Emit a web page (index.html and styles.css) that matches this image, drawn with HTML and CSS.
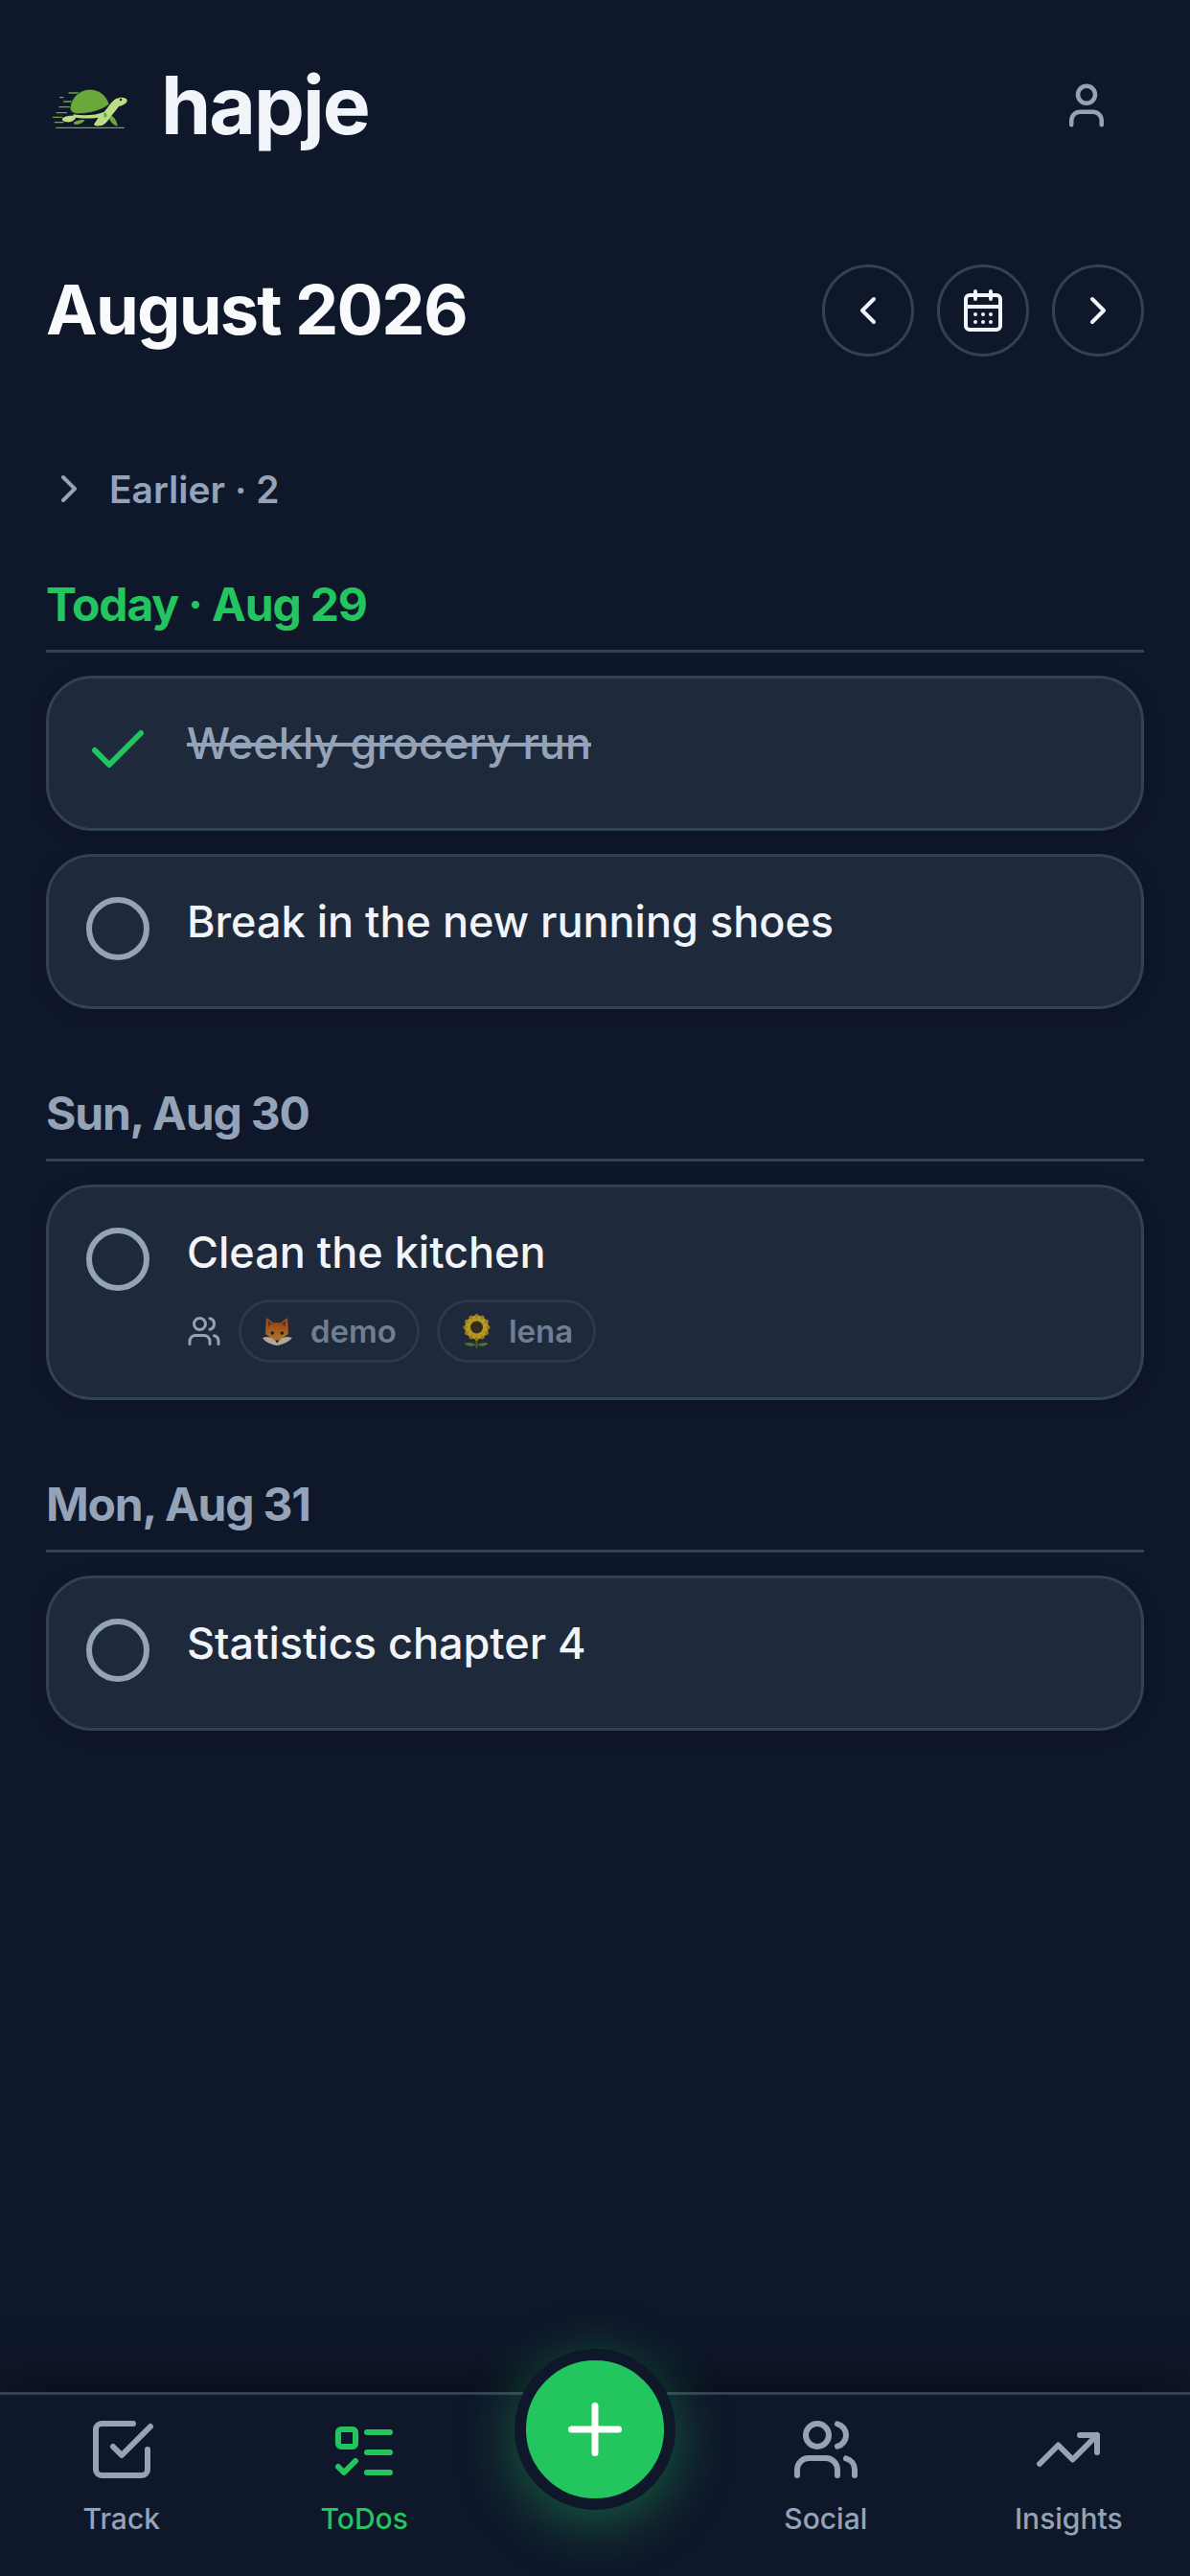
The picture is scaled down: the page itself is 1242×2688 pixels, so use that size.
FILE: index.html
```html
<!DOCTYPE html>
<html lang="en">
<head>
<meta charset="utf-8">
<title>hapje</title>
<link rel="stylesheet" href="styles.css">
</head>
<body>
<div class="app">
  <header class="topbar">
    <div class="brand">
      <svg class="logo" viewBox="0 0 330 240" aria-hidden="true">
        <g stroke="#6aa83c" stroke-width="4" stroke-linecap="round">
          <path d="M68 95h10M96 81h28M80 108h30M66 125h34M58 143h30M46 157h28M52 173h26"/>
        </g>
        <path d="M56 190h212" stroke="#6aa83c" stroke-width="4" stroke-linecap="round"/>
        <path d="M112 172c10-6 24-9 34-6-6 10-22 17-36 12z" fill="#6aa83c"/>
        <path d="M219 147c14 4 27 18 29 38-16-4-29-20-29-38z" fill="#6aa83c"/>
        <path d="M110 148c36 6 72 2 96-8 12-12 22-32 36-40 10-6 34-8 36 4 1 10-16 16-26 19-10 14-18 24-26 32-8 14-20 28-34 29-14 1-20-2-16-8 4-7 8-12 12-18-26 4-54 4-80-2z" fill="#bcdd88"/>
        <path d="M76 160c10-8 30-10 42-4-2 10-14 18-30 16-10-1-16-6-12-12z" fill="#bcdd88"/>
        <path d="M100 122c6-30 32-52 62-52 30 0 52 20 60 46-20 18-60 30-98 30-14 0-28-8-24-24z" fill="#6aa83c" stroke="#0f172a" stroke-width="2"/>
        <circle cx="258" cy="102" r="4" fill="#1b2a17"/>
        <path d="M204 146l8-4 3 12-7 6z" fill="#6aa83c"/>
      </svg>
      <span class="wordmark">hapje</span>
    </div>
    <button class="profile" type="button" aria-label="Profile">
      <svg class="icon-profile" viewBox="0 0 24 24"><path d="M19 21v-2a4 4 0 0 0-4-4H9a4 4 0 0 0-4 4v2"/><circle cx="12" cy="7" r="4"/></svg>
    </button>
  </header>

  <section class="month-row">
    <h1 class="month">August 2026</h1>
    <div class="month-nav">
      <button class="round" type="button" aria-label="Previous"><svg class="icon-48" viewBox="0 0 24 24"><path d="m15 18-6-6 6-6"/></svg></button>
      <button class="round" type="button" aria-label="Calendar"><svg class="icon-48" viewBox="0 0 24 24"><path d="M8 2v4M16 2v4M3 10h18"/><rect x="3" y="4" width="18" height="18" rx="2"/><path d="M8 14h.01M12 14h.01M16 14h.01M8 18h.01M12 18h.01M16 18h.01"/></svg></button>
      <button class="round" type="button" aria-label="Next"><svg class="icon-48" viewBox="0 0 24 24"><path d="m9 18 6-6-6-6"/></svg></button>
    </div>
  </section>

  <main class="list">
    <div class="earlier">
      <svg class="icon-48" viewBox="0 0 24 24"><path d="m9 18 6-6-6-6"/></svg>
      <span>Earlier · 2</span>
    </div>

    <section class="day">
      <h2 class="day-title today">Today · Aug 29</h2>
      <div class="cards">
        <article class="card">
          <span class="mark"><svg class="icon-check" viewBox="0 0 24 24"><path d="M20 6 9 17l-5-5"/></svg></span>
          <div class="body"><p class="title done">Weekly grocery run</p></div>
        </article>
        <article class="card">
          <span class="mark"><span class="ring"></span></span>
          <div class="body"><p class="title">Break in the new running shoes</p></div>
        </article>
      </div>
    </section>

    <section class="day">
      <h2 class="day-title">Sun, Aug 30</h2>
      <div class="cards">
        <article class="card">
          <span class="mark"><span class="ring"></span></span>
          <div class="body">
            <p class="title">Clean the kitchen</p>
            <div class="people">
              <svg class="icon-people" viewBox="0 0 24 24"><path d="M16 21v-2a4 4 0 0 0-4-4H6a4 4 0 0 0-4 4v2"/><circle cx="9" cy="7" r="4"/><path d="M22 21v-2a4 4 0 0 0-3-3.87"/><path d="M16 3.13a4 4 0 0 1 0 7.75"/></svg>
              <span class="chip">
                <svg class="emoji" viewBox="0 0 36 36" aria-hidden="true">
                  <defs><linearGradient id="foxfur" x1="0" y1="0" x2="0" y2="1"><stop offset="0" stop-color="#c9570a"/><stop offset="1" stop-color="#f59a1e"/></linearGradient></defs>
                  <path d="M5 4l8 6h6l8-6 1 14-11 10L4 18z" fill="#d9650f"/>
                  <path d="M6.500 6.500l5 4.500-4 5zM25.500 6.500l-5 4.500 4 5z" fill="#7d3608"/>
                  <path d="M16 9c6 0 11 5 12 12l-12 8L4 21c1-7 6-12 12-12z" fill="url(#foxfur)"/>
                  <path d="M1 25c5-2 9-1 12 2l3 1 3-1c3-3 7-4 13-2-3 4-10 7-16 8-6-1-13-4-15-8z" fill="#f1dcc2"/>
                  <circle cx="11.300" cy="20" r="1.800" fill="#1c1410"/>
                  <circle cx="21.300" cy="20" r="1.800" fill="#1c1410"/>
                  <path d="M14 27.500h4.600l-2.300 3z" fill="#1c1410"/>
                </svg>
                demo
              </span>
              <span class="chip">
                <svg class="emoji" viewBox="0 0 36 36" aria-hidden="true">
                  <path d="M17.500 24v11" stroke="#5f7d28" stroke-width="2"/>
                  <path d="M16.500 32c-3-2-8-3-12-1 4 3 9 4 12 1zM18.500 32c3-2 8-3 11-1-3 3-8 4-11 1z" fill="#6b8a2c"/>
                  <g fill="#d99a0c">
                    <ellipse cx="17.500" cy="4" rx="2.600" ry="4" transform="rotate(0 17.500 14)"/>
                    <ellipse cx="17.500" cy="4" rx="2.600" ry="4" transform="rotate(30 17.500 14)"/>
                    <ellipse cx="17.500" cy="4" rx="2.600" ry="4" transform="rotate(60 17.500 14)"/>
                    <ellipse cx="17.500" cy="4" rx="2.600" ry="4" transform="rotate(90 17.500 14)"/>
                    <ellipse cx="17.500" cy="4" rx="2.600" ry="4" transform="rotate(120 17.500 14)"/>
                    <ellipse cx="17.500" cy="4" rx="2.600" ry="4" transform="rotate(150 17.500 14)"/>
                    <ellipse cx="17.500" cy="4" rx="2.600" ry="4" transform="rotate(180 17.500 14)"/>
                    <ellipse cx="17.500" cy="4" rx="2.600" ry="4" transform="rotate(210 17.500 14)"/>
                    <ellipse cx="17.500" cy="4" rx="2.600" ry="4" transform="rotate(240 17.500 14)"/>
                    <ellipse cx="17.500" cy="4" rx="2.600" ry="4" transform="rotate(270 17.500 14)"/>
                    <ellipse cx="17.500" cy="4" rx="2.600" ry="4" transform="rotate(300 17.500 14)"/>
                    <ellipse cx="17.500" cy="4" rx="2.600" ry="4" transform="rotate(330 17.500 14)"/>
                  </g>
                  <g fill="#f4cb1e">
                    <ellipse cx="17.500" cy="5.500" rx="2.200" ry="3.800" transform="rotate(15 17.500 14)"/>
                    <ellipse cx="17.500" cy="5.500" rx="2.200" ry="3.800" transform="rotate(45 17.500 14)"/>
                    <ellipse cx="17.500" cy="5.500" rx="2.200" ry="3.800" transform="rotate(75 17.500 14)"/>
                    <ellipse cx="17.500" cy="5.500" rx="2.200" ry="3.800" transform="rotate(105 17.500 14)"/>
                    <ellipse cx="17.500" cy="5.500" rx="2.200" ry="3.800" transform="rotate(135 17.500 14)"/>
                    <ellipse cx="17.500" cy="5.500" rx="2.200" ry="3.800" transform="rotate(165 17.500 14)"/>
                    <ellipse cx="17.500" cy="5.500" rx="2.200" ry="3.800" transform="rotate(195 17.500 14)"/>
                    <ellipse cx="17.500" cy="5.500" rx="2.200" ry="3.800" transform="rotate(225 17.500 14)"/>
                    <ellipse cx="17.500" cy="5.500" rx="2.200" ry="3.800" transform="rotate(255 17.500 14)"/>
                    <ellipse cx="17.500" cy="5.500" rx="2.200" ry="3.800" transform="rotate(285 17.500 14)"/>
                    <ellipse cx="17.500" cy="5.500" rx="2.200" ry="3.800" transform="rotate(315 17.500 14)"/>
                    <ellipse cx="17.500" cy="5.500" rx="2.200" ry="3.800" transform="rotate(345 17.500 14)"/>
                  </g>
                  <circle cx="17.500" cy="14" r="6.500" fill="#3f2b12"/>
                </svg>
                lena
              </span>
            </div>
          </div>
        </article>
      </div>
    </section>

    <section class="day">
      <h2 class="day-title">Mon, Aug 31</h2>
      <div class="cards">
        <article class="card">
          <span class="mark"><span class="ring"></span></span>
          <div class="body"><p class="title">Statistics chapter 4</p></div>
        </article>
      </div>
    </section>
  </main>

  <nav class="tabbar">
    <a class="tab">
      <svg class="icon-tab" viewBox="0 0 24 24"><path d="M9 11l3 3L22 4"/><path d="M21 12v7a2 2 0 0 1-2 2H5a2 2 0 0 1-2-2V5a2 2 0 0 1 2-2h11"/></svg>
      <span>Track</span>
    </a>
    <a class="tab active">
      <svg class="icon-tab" viewBox="0 0 24 24"><rect x="3" y="5" width="6" height="6" rx="1"/><path d="m3 18 2 2 4-4M13 6h8M13 13h8M13 20h8"/></svg>
      <span>ToDos</span>
    </a>
    <span class="tab-gap"></span>
    <a class="tab">
      <svg class="icon-tab" viewBox="0 0 24 24"><path d="M16 21v-2a4 4 0 0 0-4-4H6a4 4 0 0 0-4 4v2"/><circle cx="9" cy="7" r="4"/><path d="M22 21v-2a4 4 0 0 0-3-3.87"/><path d="M16 3.13a4 4 0 0 1 0 7.75"/></svg>
      <span>Social</span>
    </a>
    <a class="tab">
      <svg class="icon-tab" viewBox="0 0 24 24"><path d="M22 7l-8.500 8.500-5-5L2 17"/><path d="M16 7h6v6"/></svg>
      <span>Insights</span>
    </a>
    <button class="fab" type="button" aria-label="Add">
      <svg class="icon-plus" viewBox="0 0 24 24"><path d="M5 12h14M12 5v14"/></svg>
    </button>
  </nav>
</div>
</body>
</html>
```

FILE: styles.css
```css
* { box-sizing: border-box; }
html, body { margin: 0; padding: 0; }
body {
  background: #0f172a;
  color: #f1f5f9;
  font-family: Inter, "Noto Sans", sans-serif;
}
svg { display: block; fill: none; stroke: currentColor; stroke-linecap: round; stroke-linejoin: round; stroke-width: 2; }
button { background: none; border: 0; padding: 0; color: inherit; font: inherit; }
h1, h2, p { margin: 0; }

.app { height: 2688px; display: flex; flex-direction: column; overflow: hidden; }

.topbar {
  height: 120px;
  margin-top: 50px;
  padding: 0 81px 0 40px;
  display: flex;
  align-items: center;
  justify-content: space-between;
  flex: none;
}
.brand { display: flex; align-items: center; gap: 18px; }
.logo { width: 110px; height: 80px; stroke: none; fill: none; }
.wordmark { font-size: 84px; font-weight: 700; letter-spacing: -2px; line-height: 1; color: #f1f5f9; }
.profile { color: #94a3b8; }
.icon-profile { width: 54px; height: 54px; }

.month-row {
  margin-top: 106px;
  padding: 0 48px;
  height: 96px;
  display: flex;
  align-items: center;
  justify-content: space-between;
  flex: none;
}
.month { font-size: 72px; font-weight: 700; letter-spacing: -1.800px; line-height: 1; color: #f8fafc; margin-top: -3px; }
.month-nav { display: flex; gap: 24px; }
.round {
  width: 96px; height: 96px;
  border: 3px solid #334155;
  border-radius: 50%;
  display: flex; align-items: center; justify-content: center;
  color: #f1f5f9;
}
.icon-48 { width: 48px; height: 48px; flex: none; }

.list { flex: 1; padding: 111px 48px 0; }
.earlier {
  height: 54px;
  display: flex;
  align-items: center;
  gap: 18px;
  color: #94a3b8;
  font-size: 39px;
  font-weight: 600;
  margin-bottom: 61px;
}

.day { margin-bottom: 76px; }
.day-title {
  font-size: 48px;
  font-weight: 700;
  letter-spacing: -1.200px;
  line-height: 66px;
  padding-bottom: 14px;
  border-bottom: 3px solid #334155;
  color: #94a3b8;
}
.day-title.today { color: #22c55e; }
.cards { margin-top: 24px; display: flex; flex-direction: column; gap: 24px; }

.card {
  display: flex;
  gap: 36px;
  padding: 36px;
  background: #1e293b;
  border: 3px solid #334155;
  border-radius: 48px;
  box-shadow: 0 3px 18px rgba(0, 0, 0, 0.18);
}
.mark { width: 72px; height: 72px; margin-top: 3px; flex: none; display: flex; align-items: center; justify-content: center; }
.ring { width: 66px; height: 66px; border: 6px solid #94a3b8; border-radius: 50%; }
.icon-check { width: 72px; height: 72px; color: #22c55e; }
.body { flex: 1; min-height: 84px; }
.title { font-size: 45px; font-weight: 500; line-height: 63px; color: #f1f5f9; }
.title.done { color: #94a3b8; text-decoration: line-through; }

.people { margin-top: 18px; display: flex; align-items: center; gap: 18px; }
.icon-people { width: 36px; height: 36px; color: #94a3b8; flex: none; }
.chip {
  height: 66px;
  padding: 0 21px;
  display: flex;
  align-items: center;
  gap: 15px;
  border: 3px solid #334155;
  border-radius: 33px;
  color: #94a3b8;
  font-size: 33px;
  font-weight: 600;
  opacity: 0.7;
}
.emoji { width: 36px; height: 36px; stroke: none; flex: none; }

.tabbar {
  position: relative;
  flex: none;
  height: 192px;
  padding-top: 21px;
  border-top: 3px solid #334155;
  background: #0f172a;
  box-shadow: 0 -6px 48px rgba(0, 0, 0, 0.5);
  display: grid;
  grid-template-columns: 1fr 1fr 228px 1fr 1fr;
  align-items: start;
}
.tab {
  display: flex;
  flex-direction: column;
  align-items: center;
  gap: 14px;
  color: #94a3b8;
  font-size: 30px;
  font-weight: 500;
  line-height: 45px;
}
.tab.active { color: #22c55e; }
.icon-tab { width: 72px; height: 72px; }

.fab {
  position: absolute;
  left: 537px;
  top: -48px;
  width: 168px;
  height: 168px;
  border-radius: 50%;
  background: #22c55e;
  border: 12px solid #0f172a;
  box-shadow: 0 12px 60px rgba(34, 197, 94, 0.42);
  display: flex;
  align-items: center;
  justify-content: center;
  color: #fff;
}
.icon-plus { width: 84px; height: 84px; }

.logo, .emoji { overflow: visible; }
```
